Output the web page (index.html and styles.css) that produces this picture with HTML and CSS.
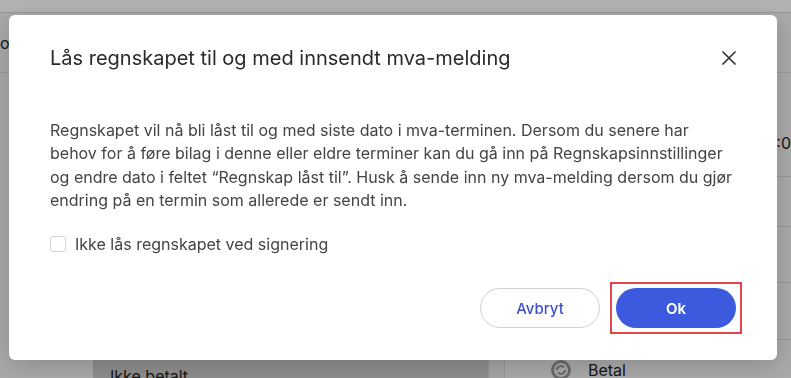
FILE: index.html
```html
<!DOCTYPE html>
<html lang="no">
<head>
<meta charset="utf-8">
<title>Lås regnskapet</title>
<link rel="stylesheet" href="styles.css">
</head>
<body>
<div class="page">
  <div class="topbar"></div>
  <div class="toolbar"><span class="crumb">o</span></div>
  <div class="content">
    <div class="gutter"></div>
    <div class="list">
      <div class="list-item">Ikke betalt</div>
    </div>
    <div class="scroll"></div>
    <div class="side">
      <div class="side-row r1"><span class="time">:0</span></div>
      <div class="side-row r2"></div>
      <div class="side-row r3"></div>
      <div class="side-row r4"></div>
      <div class="side-row r5">
        <svg class="status-icon" width="20" height="20" viewBox="0 0 20 20" aria-hidden="true">
          <circle cx="10" cy="10" r="8.5" fill="none" stroke="#9a9a9a" stroke-width="3"/>
          <path d="M6 10a4 4 0 0 1 7-2.6M14 10a4 4 0 0 1-7 2.6" fill="none" stroke="#9a9a9a" stroke-width="2.2"/>
        </svg>
        <span>Betal</span>
      </div>
    </div>
  </div>
</div>
<div class="backdrop"></div>
<div class="modal" role="dialog" aria-labelledby="modal-title">
  <div class="modal-header">
    <h2 class="modal-title" id="modal-title">Lås regnskapet til og med innsendt mva-melding</h2>
    <button class="close" aria-label="Lukk">
      <svg width="14" height="14" viewBox="0 0 14 14" aria-hidden="true">
        <path d="M1 1L13 13M13 1L1 13" stroke="#333" stroke-width="1.7" stroke-linecap="round"/>
      </svg>
    </button>
  </div>
  <p class="modal-text">Regnskapet vil nå bli låst til og med siste dato i mva-terminen. Dersom du senere har behov for å føre bilag i denne eller eldre terminer kan du gå inn på Regnskapsinnstillinger og endre dato i feltet “Regnskap låst til”. Husk å sende inn ny mva-melding dersom du gjør endring på en termin som allerede er sendt inn.</p>
  <label class="check"><span class="box"></span>Ikke lås regnskapet ved signering</label>
  <div class="actions">
    <button class="btn btn-secondary">Avbryt</button>
    <button class="btn btn-primary">Ok</button>
  </div>
</div>
</body>
</html>
```
FILE: styles.css
```css
* { box-sizing: border-box; margin: 0; padding: 0; }
html, body { width: 791px; height: 378px; overflow: hidden; }
body { font-family: Inter, "Noto Sans", sans-serif; background: #f2f2f2; color: #222; }

.page { display: flex; flex-direction: column; height: 378px; overflow: hidden; }
.topbar { height: 13px; background: #fff; border-bottom: 1px solid #d9d9d9; flex: none; }
.toolbar { height: 60px; border-bottom: 1px solid #dcdcdc; display: flex; align-items: center; font-size: 16px; flex: none; padding-top: 1px; }
.content { flex: 1; display: grid; grid-template-columns: 93px 395px 17px 1fr; min-height: 0; }
.list { padding-top: 287px; }
.list-item { background: #cbcbcb; padding: 7px 17px 0; font-size: 16px; line-height: 18px; height: 40px; }
.scroll { border-left: 1px solid #d6d6d6; border-right: 1px solid #d6d6d6; background: #e9ecec; }
.side { display: flex; flex-direction: column; }
.side-row { border-bottom: 1px solid #d6d6d6; flex: none; }
.r1 { height: 104px; padding-top: 61px; text-align: right; font-size: 16px; line-height: 18px; }
.r2 { height: 50px; }
.r3 { height: 56px; }
.r4 { height: 57px; }
.r5 { border: 0; display: flex; align-items: center; gap: 17px; padding: 20px 0 0 46px; font-size: 16px; }

.backdrop { position: fixed; inset: 0; background: rgba(0, 0, 0, 0.3); }

.modal { position: fixed; left: 9px; top: 15px; width: 768px; height: 345px; background: #fff; border-radius: 6px; box-shadow: 0 6px 24px rgba(0, 0, 0, 0.18); padding: 31px 41px 32px; display: flex; flex-direction: column; }
.modal-header { display: flex; justify-content: space-between; align-items: center; height: 24px; }
.modal-title { font-size: 20px; font-weight: 400; line-height: 24px; color: #2a2a2a; }
.close { width: 14px; height: 14px; border: 0; background: none; display: flex; cursor: pointer; }
.modal-text { margin-top: 49px; font-size: 16px; line-height: 23.4px; color: #444; }
.check { display: flex; align-items: center; gap: 9px; margin-top: 21px; font-size: 16px; line-height: 20px; color: #444; }
.box { width: 16px; height: 16px; border: 1px solid #cfd3da; border-radius: 3px; flex: none; }
.actions { margin-top: auto; display: flex; justify-content: flex-end; gap: 16px; }
.btn { width: 120px; height: 40px; border-radius: 20px; font: 500 15px Inter, sans-serif; cursor: pointer; }
.btn-secondary { background: #fff; border: 1px solid #d0d0d0; color: #3f4fcf; }
.btn-primary { position: relative; background: #3b5ade; border: 0; color: #fff; font-weight: 600; }
.btn-primary::after { content: ""; position: absolute; inset: -6px; border: 2px solid #e2454a; pointer-events: none; }
```
